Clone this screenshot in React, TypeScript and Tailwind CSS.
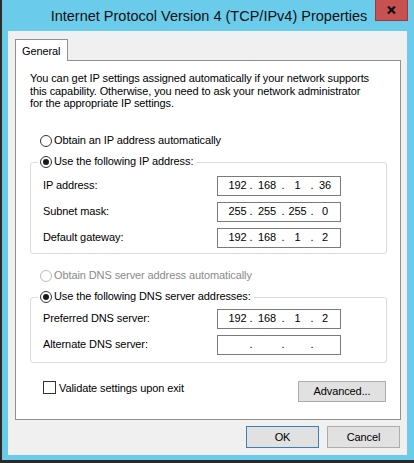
import React from 'react';

type IpRow = { label: string; parts?: string[] };

const ipRows: IpRow[] = [
  { label: 'IP address:', parts: ['192', '168', '1', '36'] },
  { label: 'Subnet mask:', parts: ['255', '255', '255', '0'] },
  { label: 'Default gateway:', parts: ['192', '168', '1', '2'] },
];

const dnsRows: IpRow[] = [
  { label: 'Preferred DNS server:', parts: ['192', '168', '1', '2'] },
  { label: 'Alternate DNS server:' },
];

function Radio({ checked = false, disabled = false }: { checked?: boolean; disabled?: boolean }) {
  return (
    <span
      className={`w-[12px] h-[12px] shrink-0 rounded-full border bg-white flex items-center justify-center ${
        disabled ? 'border-[#bcbcbc]' : 'border-[#333333]'
      }`}
    >
      {checked && <span className="w-[6px] h-[6px] rounded-full bg-[#1a1a1a]" />}
    </span>
  );
}

function IpBox({ parts }: { parts?: string[] }) {
  const p = parts ?? ['', '', '', ''];
  return (
    <div className="w-[124px] h-[20px] border border-[#7a7a7a] bg-white flex items-center pl-[8px] text-black">
      <span className="w-[23px] text-center">{p[0]}</span>
      <span className="w-[4px] text-center">.</span>
      <span className="w-[28px] text-center">{p[1]}</span>
      <span className="w-[4px] text-center">.</span>
      <span className="w-[25px] text-center">{p[2]}</span>
      <span className="w-[4px] text-center">.</span>
      <span className="w-[22px] text-center">{p[3]}</span>
    </div>
  );
}

function Rows({ rows }: { rows: IpRow[] }) {
  return (
    <div className="flex flex-col gap-[6px] pl-[12px]">
      {rows.map((r) => (
        <div key={r.label} className="flex items-center">
          <span className="w-[174px]">{r.label}</span>
          <IpBox parts={r.parts} />
        </div>
      ))}
    </div>
  );
}

export default function App() {
  return (
    <div className="relative w-[414px] h-[463px] overflow-hidden bg-[#2b2b2b] font-['Liberation_Sans',Arial,sans-serif] text-[11px] tracking-[-0.1px] text-black">
      <div className="h-[460px] bg-[#6bcbea] border-l-2 border-[#2b2b2b] flex flex-col">
        {/* title bar */}
        <div className="h-[31px] grid grid-cols-[1fr_auto_1fr]">
          <div />
          <div className="pt-[6px] pl-[2px] text-[14.5px] tracking-normal text-[#111111] whitespace-nowrap">
            Internet Protocol Version 4 (TCP/IPv4) Properties
          </div>
          <div className="flex justify-end pr-[6px]">
            <div className="w-[33px] h-[21px] bg-[#c75050] border border-t-0 border-[#9c3a3a] flex items-center justify-center">
              <svg width="9" height="8" viewBox="0 0 9 8">
                <path d="M1 0.5 L8 7.5 M8 0.5 L1 7.5" stroke="#111" strokeWidth="2.2" />
              </svg>
            </div>
          </div>
        </div>

        {/* client area */}
        <div className="ml-[6px] w-[399px] h-[424px] bg-[#f0f0f0] pl-[7px] pt-[8px] flex flex-col">
          <div className="relative z-10 -mb-px w-[53px] h-[22px] bg-white border border-b-0 border-[#8f8f8f] pl-[6px] pt-[3px]">
            General
          </div>
          <div className="w-[386px] h-[360px] bg-white border border-[#8f8f8f] flex flex-col">
            <p className="mt-[11px] pl-[14px] leading-[12.5px]">
              You can get IP settings assigned automatically if your network supports
              <br />
              this capability. Otherwise, you need to ask your network administrator
              <br />
              for the appropriate IP settings.
            </p>

            <div className="mt-[24px] pl-[24px] h-[14px] flex items-center gap-[2px]">
              <Radio />
              <span>Obtain an IP address automatically</span>
            </div>

            <div className="relative mt-[14px] ml-[14px] mr-[13px] border border-[#dcdcdc] rounded-[3px] pt-[13px] pb-[5px]">
              <div className="absolute -top-[8px] left-[7px] h-[14px] bg-white pl-[2px] pr-[3px] flex items-center gap-[2px]">
                <Radio checked />
                <span>Use the following IP address:</span>
              </div>
              <Rows rows={ipRows} />
            </div>

            <div className="mt-[15px] pl-[24px] h-[14px] flex items-center gap-[2px] text-[#8a8a8a]">
              <Radio disabled />
              <span>Obtain DNS server address automatically</span>
            </div>

            <div className="relative mt-[14px] ml-[14px] mr-[13px] border border-[#dcdcdc] rounded-[3px] pt-[11px] pb-[7px]">
              <div className="absolute -top-[8px] left-[7px] h-[14px] bg-white pl-[2px] pr-[3px] flex items-center gap-[2px]">
                <Radio checked />
                <span>Use the following DNS server addresses:</span>
              </div>
              <Rows rows={dnsRows} />
            </div>

            <div className="mt-[17px] ml-[27px] mr-[14px] flex items-start justify-between">
              <div className="flex items-center gap-[3px]">
                <span className="w-[13px] h-[13px] border border-[#333333] bg-white" />
                <span>Validate settings upon exit</span>
              </div>
              <button className="mt-[1px] w-[88px] h-[21px] bg-[#e1e1e1] border border-[#adadad] text-center">
                Advanced...
              </button>
            </div>
          </div>

          <div className="mt-[6px] pr-[7px] flex justify-end gap-[8px]">
            <button className="w-[73px] h-[22px] bg-[#e1e1e1] border border-[#3c7fb1]">OK</button>
            <button className="w-[73px] h-[22px] bg-[#e1e1e1] border border-[#adadad]">Cancel</button>
          </div>
        </div>
      </div>
    </div>
  );
}
